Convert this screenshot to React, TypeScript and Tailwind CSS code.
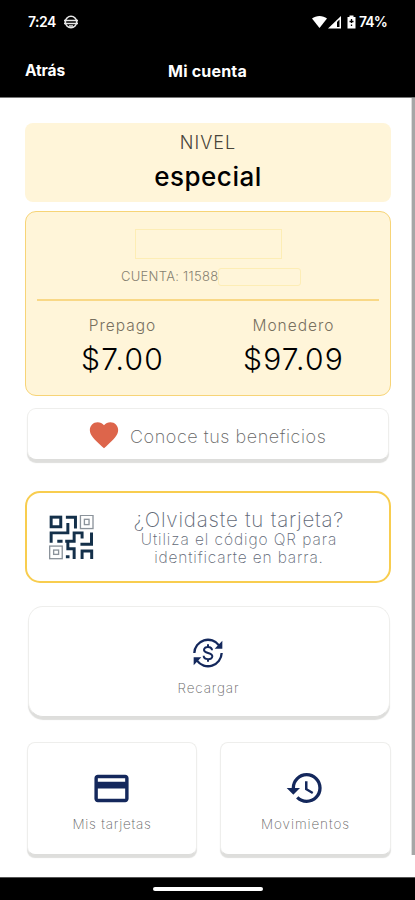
import React from 'react';
import { MdFavorite, MdHistory, MdOutlineCreditCard } from 'react-icons/md';

// --- Icons ---
const QrIcon = () => (
  <svg className="w-[45px] h-[45px]" viewBox="146 103 136 136" fill="none" stroke="#14304a" strokeWidth="9">
    <rect x="152.500" y="109.500" width="29" height="29" />
    <path d="M197 109.500H226V144M203 127V157H152.500V187M171 182H187M195 182H222V157H246V174M203 182V205H222V236M274.500 156V191.500H241M246 236V212H275V236M197 229H208" />
    <g stroke="#8b939b" strokeWidth="4">
      <rect x="241" y="104" width="38" height="40" />
      <rect x="253" y="116" width="14" height="16" />
      <rect x="148" y="197" width="38" height="38" />
      <rect x="160" y="209" width="15" height="13" />
    </g>
  </svg>
);

const RechargeIcon = () => (
  <svg className="w-[30px] h-[30px]" viewBox="0 0 90 90" fill="none" stroke="#14285c" strokeWidth="7">
    <path d="M4 45A41 41 0 0 1 78 22M86 45A41 41 0 0 1 12 68" />
    <path d="M88 8V32H65ZM2 82V58H25Z" fill="#14285c" stroke="none" />
    <path d="M45 19V27M45 63V71M57 37C57 24 33 23 33 36C33 48 58 42 58 55C58 67 32 66 32 53" strokeWidth="6" />
  </svg>
);

const StatusBar = () => (
  <div className="h-[43px] pl-[28px] pr-[29px] flex items-center justify-between text-[14px] font-semibold leading-none">
    <div className="flex items-center gap-[9px]">
      <span className="w-[27px] whitespace-nowrap tracking-[-0.5px]">7:24</span>
      <svg className="w-[14px] h-[14px]" viewBox="0 0 14 14" fill="none" stroke="#e8e8e8" strokeWidth="1.600">
        <circle cx="7" cy="7" r="5.700" />
        <path d="M0 5.500H14M0 8.500H14M5 11H9" />
      </svg>
    </div>
    <div className="flex items-center">
      <svg className="w-[44px] h-[14px]" viewBox="0 0 44 14" fill="#fff">
        <path d="M0 3.500C4 0 11 0 15 3.500L7.500 13Z" />
        <path d="M16 13.500L29 1V13.500Z" />
        <path d="M25 7L27.500 4.500V12H25Z" fill="#000" />
        <path d="M35.500 2H37.500V0.500H41.500V2H43.500V13.500H35.500Z" />
        <path d="M39.500 4V8M37.500 6.500H41.500M39.500 9.500V11" stroke="#000" strokeWidth="1.300" />
      </svg>
      <span className="ml-[3px] w-[27px] whitespace-nowrap tracking-[-0.9px]">74%</span>
    </div>
  </div>
);

// --- Shared pieces ---
const Balance = ({ label, amount }: { label: string, amount: string }) => (
  <div className="flex-1 flex flex-col items-center">
    <span className="text-[15.500px] leading-[18px] font-light text-[#77705f] tracking-[1px]">{label}</span>
    <span className="mt-[6px] text-[30px] leading-[36px] font-light text-black tracking-[1.200px]">{amount}</span>
  </div>
);

const cardStyle = "bg-white border border-[#eeeeec] border-b-[#dddddb] shadow-[0_3px_1px_#dededc]";

function App() {
  return (
    <div className="w-[415px] h-[900px] overflow-hidden flex flex-col bg-black font-['Inter',sans-serif] text-white">

      {/* Header */}
      <header className="h-[98px] shrink-0 border-b border-[#777]">
        <StatusBar />
        <div className="h-[56px] px-[25px] grid grid-cols-[1fr_auto_1fr] items-center text-[16px] font-bold">
          <span className="text-[15.500px] tracking-[-0.1px]">Atrás</span>
          <h1 className="tracking-[0.200px]">Mi cuenta</h1>
        </div>
      </header>

      <div className="h-[779px] shrink-0 flex bg-white">
        <main className="flex-1 pt-[25px]">

          {/* Level */}
          <section className="ml-[25px] w-[366px] h-[79px] rounded-[8px] bg-[#fff5d9] flex flex-col items-center">
            <span className="mt-[8px] text-[18px] leading-[24px] font-light text-[#48443a] tracking-[1px]">NIVEL</span>
            <span className="mt-[6px] text-[26px] leading-[32px] font-medium text-black tracking-[0.500px]">especial</span>
          </section>

          {/* Account */}
          <section className="mt-[9px] ml-[25px] w-[366px] h-[185px] px-[11px] rounded-[11px] border-[1.500px] border-[#f7d477] bg-[#fff5d9] flex flex-col">
            <div className="mt-[17px] mx-auto w-[147px] h-[30px] border border-[#fdedb5]" />
            <div className="mt-[8px] ml-[84px] h-[19px] flex items-center">
              <span className="w-[97px] whitespace-nowrap text-[13px] font-light text-[#858070] tracking-[0.280px]">CUENTA: 11588</span>
              <span className="w-[83px] h-[18px] border border-[#fdedb5] rounded-[3px]" />
            </div>
            <div className="mt-[13px] h-[1.500px] shrink-0 bg-[#f9d886]" />
            <div className="mt-[16px] flex">
              <Balance label="Prepago" amount="$7.00" />
              <Balance label="Monedero" amount="$97.09" />
            </div>
          </section>

          {/* Benefits */}
          <button className={`mt-[12px] ml-[27px] w-[362px] h-[52px] pl-[59px] rounded-[9px] flex items-center ${cardStyle}`}>
            <MdFavorite className="w-[34px] h-[34px] mt-[2px] text-[#dd654b]" />
            <span className="mt-[4px] ml-[9px] whitespace-nowrap text-[18px] font-extralight text-[#666] tracking-[0.550px]">Conoce tus beneficios</span>
          </button>

          {/* QR */}
          <button className="mt-[31px] ml-[25px] w-[366px] h-[92px] pl-[22px] rounded-[15px] border-2 border-[#f8cd4f] bg-white flex items-center">
            <QrIcon />
            <div className="ml-[20px] w-[250px] flex flex-col items-center whitespace-nowrap font-extralight text-[#626977]">
              <span className="text-[20.500px] leading-[23px] tracking-[0.800px]">¿Olvidaste tu tarjeta?</span>
              <span className="text-[15.500px] leading-[18px] tracking-[0.920px]">Utiliza el código QR para</span>
              <span className="text-[15.500px] leading-[18px] tracking-[0.850px]">identificarte en barra.</span>
            </div>
          </button>

          {/* Recharge */}
          <button className={`mt-[23px] ml-[28px] w-[362px] h-[111px] rounded-[15px] flex flex-col items-center ${cardStyle}`}>
            <span className="mt-[31px] mr-[2px] h-[30px]"><RechargeIcon /></span>
            <span className="mt-[11px] mr-[1px] text-[13.500px] leading-[18px] font-extralight text-[#666] tracking-[0.850px]">Recargar</span>
          </button>

          {/* Cards & movements */}
          <div className="mt-[25px] ml-[27px] flex gap-[23px]">
            <button className={`w-[170px] h-[113px] rounded-[8px] flex flex-col items-center ${cardStyle}`}>
              <MdOutlineCreditCard className="mt-[25px] w-[41px] h-[41px] mr-[1px] text-[#14285c]" />
              <span className="mt-[6px] text-[13.500px] leading-[18px] font-extralight text-[#666] tracking-[0.750px]">Mis tarjetas</span>
            </button>
            <button className={`w-[171px] h-[113px] rounded-[8px] flex flex-col items-center ${cardStyle}`}>
              <MdHistory className="mt-[25px] w-[40px] h-[40px] mr-[2px] text-[#14285c]" />
              <span className="mt-[7px] text-[13.500px] leading-[18px] font-extralight text-[#666] tracking-[0.900px]">Movimientos</span>
            </button>
          </div>
        </main>

        {/* Scroll thumb */}
        <div className="w-[4px] h-[757px] border-l border-[#ddd] bg-[#a6a6a6]" />
      </div>

      {/* Gesture bar */}
      <footer className="flex-1 border-t border-[#555] flex justify-center items-center">
        <div className="w-[110px] h-[4px] rounded-full bg-white" />
      </footer>
    </div>
  );
}

export default App;
